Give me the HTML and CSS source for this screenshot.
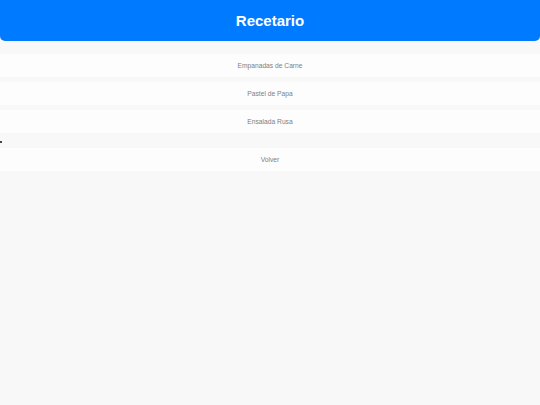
FILE: index.html
```html
<!DOCTYPE html>
<html lang="es">
  <head>
    <meta charset="UTF-8" />
    <meta name="viewport" content="width=device-width, initial-scale=1.0" />
    <title>Recetario</title>
    <link rel="stylesheet" href="styles.css">
  </head>
  <body>
    <!-- Header -->
    <header class="header">
      <h1>Recetario</h1>
    </header>

    <!-- Recipe list -->
    <ul class="recipes">
      <li class="recipe">Empanadas de Carne</li>
      <li class="recipe">Pastel de Papa</li>
      <li class="recipe">Ensalada Rusa</li>
    </ul>

    <div class="spacer"><span class="bullet"></span></div>

    <div class="recipe back">Volver</div>
  </body>
</html>
```

FILE: styles.css
```css
body {
  font-family: "Liberation Sans", Arial, sans-serif;
  margin: 0;
  background: #f8f8f8;
}

.header {
  height: 41px;
  background: #007bff;
  border-radius: 0 0 5px 5px;
  display: flex;
  justify-content: center;
  align-items: center;
}

.header h1 {
  margin: 0;
  color: #ffffff;
  font-size: 15px;
  font-weight: bold;
}

.recipes {
  list-style: none;
  margin: 13px 0 0;
  padding: 0;
  display: flex;
  flex-direction: column;
  gap: 5px;
}

.recipe {
  height: 23px;
  background: #fdfdfd;
  display: flex;
  justify-content: center;
  align-items: center;
  font-size: 6.7px;
  color: #808080;
}

.spacer {
  height: 15px;
  display: flex;
  align-items: center;
}

.bullet {
  width: 2px;
  height: 2px;
  margin-top: 3px;
  background: #444;
}
```
